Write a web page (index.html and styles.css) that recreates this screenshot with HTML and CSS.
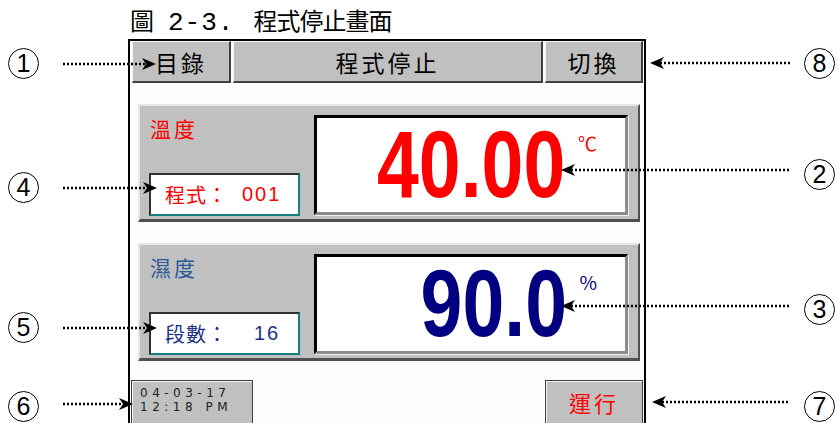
FILE: index.html
```html
<!DOCTYPE html>
<html>
<head>
<meta charset="utf-8">
<title>程式停止畫面</title>
<link rel="stylesheet" href="styles.css">
</head>
<body>
<div class="page">
  <p class="caption">圖<span class="fig">2-3.</span>程式停止畫面</p>

  <div class="screen">
    <div class="topbar">
      <div class="key">目錄</div>
      <div class="key">程式停止</div>
      <div class="key">切換</div>
    </div>

    <div class="panel temp">
      <div class="side">
        <div class="label">溫度</div>
        <div class="info">程式：<span class="val">001</span></div>
      </div>
      <div class="readout">
        <span class="num">40.00</span>
        <span class="unit">℃</span>
      </div>
    </div>

    <div class="panel humid">
      <div class="side">
        <div class="label">濕度</div>
        <div class="info">段數：<span class="val">16</span></div>
      </div>
      <div class="readout">
        <span class="num">90.0</span>
        <span class="unit">%</span>
      </div>
    </div>

    <div class="footer">
      <div class="key clock">04-03-17<br>12:18 PM</div>
      <div class="key run">運行</div>
    </div>
  </div>

  <!-- callout annotations -->
  <svg class="leaders" width="838" height="423" viewBox="0 0 838 423">
    <g class="dots">
      <line x1="63" y1="64" x2="146" y2="64"/>
      <line x1="63" y1="188" x2="147" y2="188"/>
      <line x1="63" y1="328" x2="147" y2="328"/>
      <line x1="63" y1="404" x2="123" y2="404"/>
      <line x1="660" y1="63" x2="790" y2="63"/>
      <line x1="571" y1="170" x2="790" y2="170"/>
      <line x1="571" y1="306" x2="790" y2="306"/>
      <line x1="662" y1="402" x2="790" y2="402"/>
    </g>
    <g class="heads">
      <path d="M156 64 L142 58 L146 64 L142 70 Z"/>
      <path d="M157 188 L143 182 L147 188 L143 194 Z"/>
      <path d="M157 328 L143 322 L147 328 L143 334 Z"/>
      <path d="M133 404 L119 398 L123 404 L119 410 Z"/>
      <path d="M650 63 L664 57 L660 63 L664 69 Z"/>
      <path d="M561 170 L575 164 L571 170 L575 176 Z"/>
      <path d="M561 306 L575 300 L571 306 L575 312 Z"/>
      <path d="M652 402 L666 396 L662 402 L666 408 Z"/>
    </g>
  </svg>
  <span class="mark" style="left:8px;top:48px">1</span>
  <span class="mark" style="left:8px;top:172px">4</span>
  <span class="mark" style="left:8px;top:312px">5</span>
  <span class="mark" style="left:8px;top:391px">6</span>
  <span class="mark" style="left:804px;top:48px">8</span>
  <span class="mark" style="left:804px;top:159px">2</span>
  <span class="mark" style="left:804px;top:294px">3</span>
  <span class="mark" style="left:804px;top:391px">7</span>
</div>
</body>
</html>
```
FILE: styles.css
```css
html, body {
   margin: 0;
   background-color: white;
   overflow: hidden;
}

body {
   font-family: "Noto Sans CJK TC", "Liberation Sans", sans-serif;
   color: #000;
}

.page {
   position: relative;
   width: 838px;
   height: 423px;
}

.caption {
   margin: 0;
   height: 39px;
   line-height: 39px;
   padding-left: 130px;
   font-size: 24px;
   letter-spacing: -1px;
   white-space: pre;
}

.caption .fig {
   display: inline-block;
   margin: 0 19px 0 15px;
   font-family: "Liberation Mono", monospace;
   font-size: 26px;
   letter-spacing: 1px;
}

.screen {
   margin-left: 128px;
   width: 518px;
   height: 420px;
   box-sizing: border-box;
   border: 2px solid #000;
   border-bottom: none;
   background-color: #fcfcfc;
}

.topbar {
   display: grid;
   grid-template-columns: 99px 310px 98px;
   gap: 2px;
   padding: 0 1px 0 2px;
   height: 42px;
}

.key {
   box-sizing: border-box;
   background-color: #c0c0c0;
   border-top: 1px solid #f4f4f4;
   border-left: 1px solid #f4f4f4;
   border-right: 2px solid #404040;
   border-bottom: 2px solid #404040;
   display: flex;
   align-items: center;
   justify-content: center;
   font-size: 23px;
   letter-spacing: 3px;
}

/* panels */

.panel {
   box-sizing: border-box;
   margin: 21px 4px 0 8px;
   height: 118px;
   padding: 9px 10px 8px 0;
   background-color: #c0c0c0;
   border-top: 2px solid #e6e6e6;
   border-left: 2px solid #e6e6e6;
   border-right: 2px solid #505050;
   border-bottom: 3px solid #505050;
   display: grid;
   grid-template-columns: 1fr 314px;
}

.side {
   display: flex;
   flex-direction: column;
   padding-left: 9px;
}

.label {
   font-size: 21px;
   letter-spacing: 3px;
   line-height: 26px;
   padding-left: 1px;
}

.info {
   margin-top: auto;
   margin-bottom: -1px;
   box-sizing: border-box;
   width: 151px;
   height: 43px;
   background-color: #fff;
   border-top: 2px solid #303030;
   border-left: 2px solid #303030;
   border-right: 2px solid #108080;
   border-bottom: 2px solid #108080;
   display: flex;
   align-items: center;
   padding-left: 14px;
   font-size: 20px;
   letter-spacing: 1px;
}

.info .val {
   margin-left: 14px;
   font-family: "Liberation Sans", sans-serif;
   letter-spacing: 2px;
}

.readout {
   box-sizing: border-box;
   background-color: #fff;
   border-top: 3px solid #000;
   border-left: 3px solid #000;
   border-right: 3px solid #8c8c8c;
   border-bottom: 3px solid #8c8c8c;
   box-shadow: 1px 1px 0 #f0f0f0;
   display: flex;
   justify-content: flex-end;
   align-items: center;
   padding-right: 28px;
}

.num {
   font-family: "Liberation Sans", sans-serif;
   font-weight: bold;
   font-size: 94px;
   line-height: 1;
   transform: scaleX(0.8);
   transform-origin: right center;
}

.unit {
   align-self: flex-start;
   margin-top: 13px;
   margin-left: 13px;
   font-size: 19px;
   line-height: 24px;
}

.temp .label, .temp .info, .temp .num, .temp .unit {
   color: #ff0000;
}

.humid .label {
   color: #2a5a94;
}

.humid .info {
   color: #1e2f86;
}

.humid .num, .humid .unit {
   color: #000080;
}

.humid .info .val {
   margin-left: 26px;
}

/* bottom keys */

.footer {
   display: flex;
   justify-content: space-between;
   margin-top: 19px;
   padding: 0 1px 0 1px;
}

.footer .key {
   height: 50px;
   border: 1px solid #404040;
   box-shadow: inset 1px 1px 0 #f4f4f4;
}

.clock {
   width: 122px;
   align-items: flex-start !important;
   justify-content: flex-start !important;
   padding: 5px 0 0 8px;
   font-family: "DejaVu Sans", sans-serif;
   font-size: 12px;
   line-height: 14px;
   letter-spacing: 4.5px;
   color: #202020;
}

.run {
   width: 98px;
   align-items: flex-start !important;
   padding-top: 5px;
   color: #ff0000;
   font-size: 22px;
}

/* annotations */

.leaders {
   position: absolute;
   left: 0;
   top: 0;
}

.dots line {
   stroke: #000;
   stroke-width: 2.5;
   stroke-dasharray: 2 2;
}

.heads path {
   fill: #000;
}

.mark {
   position: absolute;
   box-sizing: border-box;
   width: 31px;
   height: 31px;
   border: 1.5px solid #000;
   border-radius: 50%;
   display: flex;
   align-items: center;
   justify-content: center;
   font-family: "Liberation Sans", sans-serif;
   font-size: 25px;
   line-height: 27px;
}
```
